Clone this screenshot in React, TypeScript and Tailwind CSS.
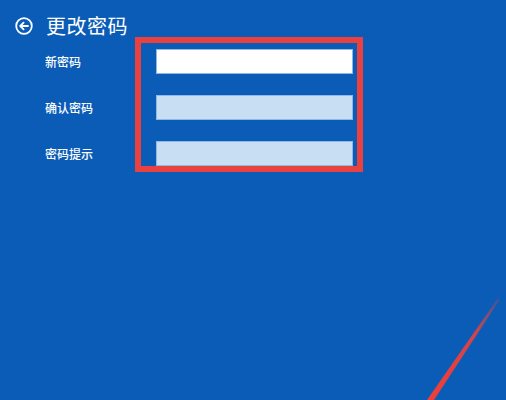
import React from 'react'

// ─── FIELDS ────────────────────────────────────────────────────
const fields = [
  { label: '新密码', active: true },
  { label: '确认密码', active: false },
  { label: '密码提示', active: false },
]

const BackIcon: React.FC = () => (
  <svg width="18" height="18" viewBox="0 0 18 18" fill="none">
    <circle cx="9" cy="9" r="7.8" stroke="white" strokeWidth="1.8" />
    <path d="M13 9H5.5M8.6 5.6L5.2 9l3.4 3.4" stroke="white" strokeWidth="1.8" strokeLinecap="round" strokeLinejoin="round" />
  </svg>
)

export default function App() {
  return (
    <div
      className="relative w-[506px] h-[400px] overflow-hidden bg-[#0b5cb6] text-white"
      style={{ fontFamily: '"Noto Sans CJK SC", "Noto Sans", sans-serif' }}
    >
      {/* Header */}
      <div className="flex items-center gap-[13px] pl-[15px] pt-[14px] h-[37px]">
        <BackIcon />
        <h1 className="text-[20px] leading-[22px] font-normal tracking-[0.5px]">更改密码</h1>
      </div>

      {/* Form */}
      <div className="flex">
        <div className="w-[135px] pl-[45px] pt-[12px] flex flex-col gap-[21px]">
          {fields.map(f => (
            <div key={f.label} className="h-[25px] flex items-center text-[12px] font-medium">
              {f.label}
            </div>
          ))}
        </div>
        <div className="w-[228px] h-[135px] border-[6px] border-[#e8413f] pl-[15px] pr-[4px] pt-[6px] flex flex-col gap-[21px]">
          {fields.map(f => (
            <div
              key={f.label}
              className={`h-[25px] w-full ${f.active ? 'bg-white' : 'bg-[#c8def2]'} border border-[#8fb8e6]`}
            />
          ))}
        </div>
      </div>

      {/* Annotation stroke */}
      <svg className="absolute left-0 top-0" width="506" height="400" viewBox="0 0 506 400">
        <defs>
          <linearGradient id="fade" x1="498" y1="298" x2="430" y2="400" gradientUnits="userSpaceOnUse">
            <stop offset="0" stopColor="#e8413f" stopOpacity="0.2" />
            <stop offset="0.35" stopColor="#e8413f" stopOpacity="0.9" />
            <stop offset="1" stopColor="#ef3f36" />
          </linearGradient>
        </defs>
        <polygon points="498,298 499.5,300 434,400 427,400" fill="url(#fade)" />
      </svg>
    </div>
  )
}
